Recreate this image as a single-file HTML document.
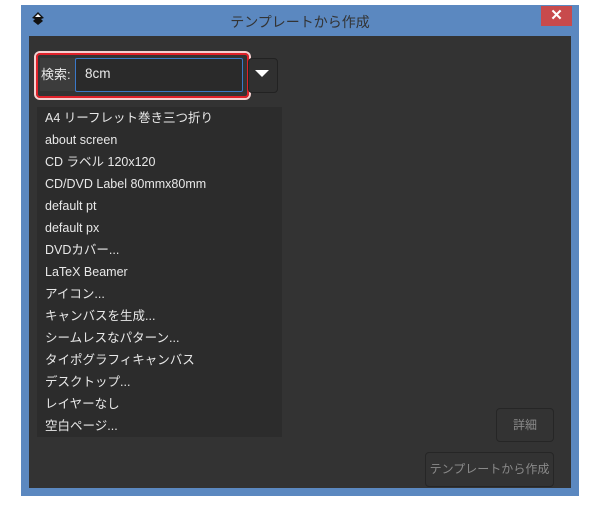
<!DOCTYPE html>
<html><head><meta charset="utf-8"><style>
body{margin:0;width:600px;height:512px;background:#fff;position:relative;overflow:hidden;font-family:"Liberation Sans","Noto Sans CJK JP",sans-serif;}
.win{position:absolute;left:21px;top:5px;width:558px;height:491px;background:#5b88c0;}
.title{position:absolute;left:0;right:0;top:8px;text-align:center;font-size:14px;line-height:18px;color:#333;}
.close{position:absolute;left:520px;top:1px;width:31px;height:20px;background:#c84a4c;color:#fff;font-size:15px;text-align:center;line-height:20px;font-weight:bold;}
.inner{position:absolute;left:8px;top:31px;width:542px;height:452px;background:#333333;}
.t{position:absolute;color:#e8e8e8;font-size:12.5px;line-height:16px;height:16px;white-space:nowrap;}
</style></head><body>
<div class="win">
 <svg style="position:absolute;left:9px;top:6px" width="16" height="16" viewBox="0 0 16 16"><path d="M8 1 L14 7 L11 8 L13 10 L8 14 L3 10 L5 8 L2 7 Z" fill="#111"/><path d="M8 3 L11 6 L5 6 Z" fill="#fff"/></svg>
 <div class="title">テンプレートから作成</div>
 <div class="close">✕</div>
 <div class="inner"></div>
</div>
<div style="position:absolute;left:36px;top:53px;width:209px;height:41px;border:2px solid #e0212a;border-radius:4px;box-shadow:0 0 0 2px #f4d0d0;"></div>
<div style="position:absolute;left:40px;top:58px;width:36px;height:33px;background:#3c3c3c;"></div>
<div class="t" style="left:41px;top:67px;font-size:13px;">検索:</div>
<div style="position:absolute;left:75px;top:58px;width:166px;height:32px;border:1px solid #3a78c8;border-radius:2px;background:#2a2a2a;"></div>
<div class="t" style="left:85px;top:66px;font-size:13.5px;">8cm</div>
<div style="position:absolute;left:248px;top:58px;width:28px;height:33px;border:1px solid #222;border-radius:4px;background:#303030;"></div>
<svg style="position:absolute;left:255px;top:70px" width="14" height="8"><path d="M0 0 H14 L7 7 Z" fill="#fff"/></svg>
<div style="position:absolute;left:37px;top:107px;width:245px;height:330px;background:#2c2c2c;"></div>
<div class="t" style="left:45px;top:110px">A4 リーフレット巻き三つ折り</div>
<div class="t" style="left:45px;top:132px">about screen</div>
<div class="t" style="left:45px;top:154px">CD ラベル 120x120</div>
<div class="t" style="left:45px;top:176px">CD/DVD Label 80mmx80mm</div>
<div class="t" style="left:45px;top:198px">default pt</div>
<div class="t" style="left:45px;top:220px">default px</div>
<div class="t" style="left:45px;top:242px">DVDカバー...</div>
<div class="t" style="left:45px;top:264px">LaTeX Beamer</div>
<div class="t" style="left:45px;top:286px">アイコン...</div>
<div class="t" style="left:45px;top:308px">キャンバスを生成...</div>
<div class="t" style="left:45px;top:330px">シームレスなパターン...</div>
<div class="t" style="left:45px;top:352px">タイポグラフィキャンバス</div>
<div class="t" style="left:45px;top:374px">デスクトップ...</div>
<div class="t" style="left:45px;top:396px">レイヤーなし</div>
<div class="t" style="left:45px;top:418px">空白ページ...</div>
<div style="position:absolute;left:496px;top:408px;width:56px;height:32px;border:1px solid #262626;border-radius:4px;background:#333;color:#8a8a8a;font-size:12px;text-align:center;line-height:32px;">詳細</div>
<div style="position:absolute;left:425px;top:452px;width:127px;height:33px;border:1px solid #262626;border-radius:4px;background:#333;color:#8a8a8a;font-size:12px;text-align:center;line-height:33px;">テンプレートから作成</div>
</body></html>
